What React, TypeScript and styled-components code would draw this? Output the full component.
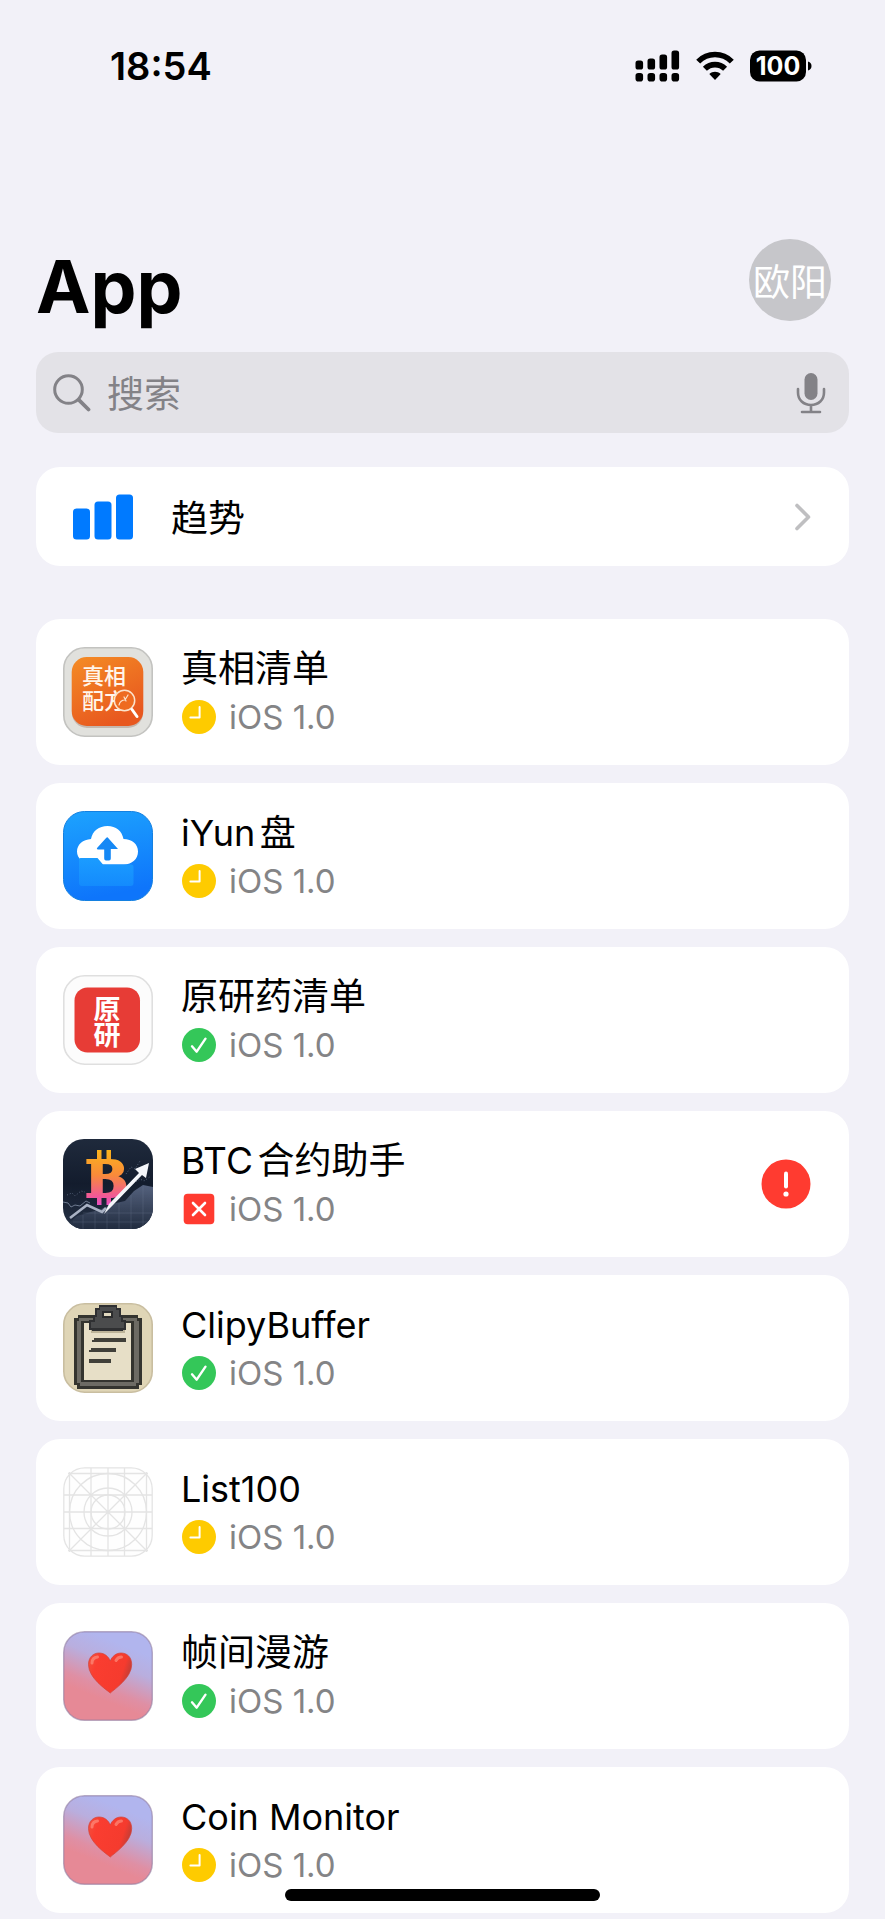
import React from "react";
import styled, { createGlobalStyle } from "styled-components";

const cjk = '"Noto Sans CJK SC"';

const GlobalStyle = createGlobalStyle`
  *, *::before, *::after { box-sizing: border-box; }
  body {
    margin: 0;
    background: #f2f1f8;
    color: #000;
    font-family: Inter, ${cjk}, sans-serif;
    text-autospace: normal;
  }
`;

const Screen = styled.div`
  display: flex;
  flex-direction: column;
  padding: 0 36px 7px;
`;

const StatusBar = styled.div`
  display: flex;
  align-items: center;
  justify-content: space-between;
  height: 132px;
  padding: 0 37px 0 74px;
`;

const Clock = styled.time`
  font-size: 38px;
  line-height: 48px;
  font-weight: 600;
`;

const Indicators = styled.div`
  display: flex;
  align-items: center;
  gap: 16px;
`;

const Header = styled.header`
  display: flex;
  align-items: flex-end;
  justify-content: space-between;
  margin-top: 107px;
  padding-right: 18px;
`;

const Title = styled.h1`
  margin: 0;
  font-size: 73px;
  line-height: 68px;
  font-weight: 700;
`;

const Avatar = styled.button`
  display: flex;
  align-items: center;
  justify-content: center;
  width: 82px;
  height: 82px;
  padding: 0;
  border: 0;
  border-radius: 50%;
  background: #c6c6ca;
  color: #fff;
  font: 400 37px/48px ${cjk}, sans-serif;
  white-space: nowrap;
`;

const SearchBar = styled.label`
  display: flex;
  align-items: center;
  gap: 16px;
  height: 81px;
  margin-top: 31px;
  padding: 0 23px 0 17px;
  border-radius: 22px;
  background: #e3e2e7;
  color: #838287;
`;

const SearchInput = styled.input`
  flex: 1;
  min-width: 0;
  padding: 4px 0 0;
  border: 0;
  outline: 0;
  background: transparent;
  color: #000;
  font: 400 37px/48px Inter, ${cjk}, sans-serif;
  &::placeholder { color: #838287; opacity: 1; }
`;

const IconButton = styled.button`
  display: flex;
  padding: 0;
  border: 0;
  background: none;
  color: inherit;
`;

const Card = styled.a`
  display: flex;
  align-items: center;
  border-radius: 24px;
  background: #fff;
  color: inherit;
  text-decoration: none;
`;

const TrendCard = styled(Card)`
  gap: 37px;
  height: 99px;
  margin-top: 34px;
  padding: 0 37px;
`;

const TrendLabel = styled.span`
  flex: 1;
  padding-top: 4px;
  font-size: 37px;
  line-height: 48px;
`;

const AppList = styled.ul`
  display: flex;
  flex-direction: column;
  gap: 18px;
  margin: 53px 0 0;
  padding: 0;
  list-style: none;
`;

const AppCard = styled(Card)`
  gap: 28px;
  padding: 24px 38px 24px 27px;
`;

const AppInfo = styled.div`
  flex: 1;
  min-width: 0;
  padding-top: 2px;
`;

const AppName = styled.h2<{ $latin: boolean }>`
  margin: 0;
  font-size: ${({ $latin }) => ($latin ? 36 : 37)}px;
  line-height: 48px;
  font-weight: 400;
`;

const AppVersion = styled.p`
  display: flex;
  align-items: center;
  gap: 12px;
  margin: 0;
  color: #848486;
  font-size: 33px;
  line-height: 48px;
`;

const HomeIndicator = styled.div`
  position: fixed;
  bottom: 18px;
  left: 50%;
  width: 315px;
  height: 12px;
  margin-left: -158px;
  border-radius: 6px;
  background: #000;
`;

type Status = "waiting" | "ready" | "rejected";

const StatusIcon = ({ status }: { status: Status }) => (
  <svg width="36" height="36" viewBox="0 0 36 36" fill="none" stroke="#fff" strokeLinecap="round" strokeLinejoin="round" role="img" aria-label={status}>
    {status === "waiting" && (
      <>
        <circle cx="18" cy="18" r="17" fill="#fecb00" stroke="none" />
        <path d="M18.6 8v10.6H9.4" strokeWidth="2" />
      </>
    )}
    {status === "ready" && (
      <>
        <circle cx="18" cy="18" r="17" fill="#34c759" stroke="none" />
        <path d="M11 19.3l4.7 5.4 8.8-13" strokeWidth="2.4" />
      </>
    )}
    {status === "rejected" && (
      <>
        <rect x="2.7" y="2.7" width="30.6" height="30.6" rx="4" fill="#ff3b30" stroke="none" />
        <path d="M12 12l12 12M24 12L12 24" strokeWidth="2.6" />
      </>
    )}
  </svg>
);

const Art = ({ children }: { children: React.ReactNode }) => (
  <svg width="90" height="90" viewBox="0 0 90 90" aria-hidden="true">{children}</svg>
);

const TruthArt = () => (
  <Art>
    <defs>
      <linearGradient id="orange" x1="0" y1="0" x2="0.5" y2="1">
        <stop offset="0" stopColor="#f48c25" />
        <stop offset="1" stopColor="#e8581f" />
      </linearGradient>
    </defs>
    <rect x="0.8" y="0.8" width="88.4" height="88.4" rx="21" fill="#e1e1dd" stroke="#c3c3c0" strokeWidth="1.6" />
    <rect x="9" y="12" width="71" height="69" rx="15" fill="#b9a59a" opacity="0.7" />
    <rect x="8.7" y="10" width="71.6" height="69" rx="15" fill="url(#orange)" />
    <g fill="#fff5ea" fontFamily={cjk} fontWeight="500" fontSize="22">
      <text x="19" y="37">真相</text>
      <text x="19" y="62">配方</text>
    </g>
    <circle cx="61.5" cy="53.5" r="10.2" fill="#ee6b20" stroke="#fbe3cd" strokeWidth="1.5" />
    <path d="M56 58c1-4 3-5 6-5l3-5M61 50l2 4" fill="none" stroke="#fbe3cd" strokeWidth="1.2" strokeLinecap="round" />
    <path d="M69 62.5l5 7" stroke="#fff" strokeWidth="3" strokeLinecap="round" />
  </Art>
);

const CloudArt = () => (
  <Art>
    <defs>
      <linearGradient id="sky" x1="0" y1="0" x2="0.2" y2="1">
        <stop offset="0" stopColor="#1da3fe" />
        <stop offset="1" stopColor="#0e75fb" />
      </linearGradient>
      <linearGradient id="folder" x1="0" y1="0" x2="0" y2="1">
        <stop offset="0" stopColor="#1b9cff" />
        <stop offset="1" stopColor="#148bfd" />
      </linearGradient>
    </defs>
    <rect x="0.5" y="0.5" width="89" height="89" rx="21" fill="url(#sky)" stroke="#1480e0" />
    <path d="M28 53C20 53 14 47 14 40.500C14 33.500 20 28.500 28 28C29.500 20 36 15 44.500 15C53 15 59 20 60.500 28C69 28 75 33 75 40.500C75 48 69 53.500 61 53.500H28z" fill="#fff" />
    <path d="M16 48.500Q16 47 17.500 47H34.500L40 53.500H68Q70.500 53.500 70.500 56V72Q70.500 75 67.500 75H19Q16 75 16 72z" fill="url(#folder)" />
    <path d="M44.500 26.200L55 38H47.800V47.500Q47.800 49.500 46 49.500H43Q41.200 49.500 41.200 47.500V38.500H35Q33 38 34.500 36.500L43.300 26.800Q44 26 44.500 26.200z" fill="#1588f5" />
  </Art>
);

const OriginalArt = () => (
  <Art>
    <rect x="0.8" y="0.8" width="88.4" height="88.4" rx="21" fill="#fcfcfc" stroke="#dfdfdf" strokeWidth="1.6" />
    <rect x="11.500" y="12.500" width="65.500" height="65" rx="13" fill="#e73c36" />
    <g fill="#fff" fontFamily={cjk} fontWeight="700" fontSize="27" textAnchor="middle">
      <text x="44" y="44">原</text>
      <text x="44" y="70">研</text>
    </g>
  </Art>
);

const BitcoinArt = () => (
  <Art>
    <defs>
      <linearGradient id="coin" gradientUnits="userSpaceOnUse" x1="40" y1="12" x2="40" y2="66">
        <stop offset="0" stopColor="#fbb21c" />
        <stop offset="0.45" stopColor="#f98a3a" />
        <stop offset="0.85" stopColor="#f0579a" />
        <stop offset="1" stopColor="#e84fc0" />
      </linearGradient>
      <linearGradient id="night" x1="0" y1="0" x2="0" y2="1">
        <stop offset="0" stopColor="#1f2a3c" />
        <stop offset="0.5" stopColor="#131c2d" />
        <stop offset="1" stopColor="#263246" />
      </linearGradient>
      <linearGradient id="hill" x1="0" y1="0" x2="0" y2="1">
        <stop offset="0" stopColor="#55627e" />
        <stop offset="1" stopColor="#222d40" />
      </linearGradient>
      <clipPath id="tile"><rect width="90" height="90" rx="21" /></clipPath>
    </defs>
    <g clipPath="url(#tile)">
      <rect width="90" height="90" fill="url(#night)" />
      <path d="M0 90L14 77L38 70L53 64L62 62L71 52L80 46L90 48V90z" fill="url(#hill)" />
      <path d="M20 76V90M32 72V90M44 68V90M56 64V90M68 56V90M80 48V90M20 74H90M10 83H90" stroke="#74819b" strokeWidth="0.5" opacity="0.5" />
      <path d="M0 63l5 1 3 4 4-2 5 1 6-5 4 2" fill="none" stroke="#77849a" strokeWidth="0.9" />
      <path d="M4 56l5-2 3 3 6-5 4 1M63 35l5-7 4 2 5-8M68 46l9-6 4 2 7-5" fill="none" stroke="#66738c" strokeWidth="0.8" strokeDasharray="1 2" />
      <g fill="url(#coin)">
        <rect x="34" y="11" width="4.500" height="12" />
        <rect x="43.500" y="11" width="4.500" height="12" />
        <rect x="34" y="56" width="4.500" height="10" />
        <rect x="43.500" y="56" width="4.500" height="10" />
        <text x="22" y="58" fontFamily="DejaVu Serif" fontWeight="700" fontSize="51" stroke="url(#coin)" strokeWidth="2">B</text>
      </g>
      <path d="M7 79L24 66L39 73L43 69" fill="none" stroke="#a9b2c4" strokeWidth="2.600" />
      <path d="M41 75L46 65L76 34L72 30L86 24L83 39L79 36L51 65z" fill="#f4f6fa" />
    </g>
  </Art>
);

const ClipboardArt = () => (
  <Art>
    <rect x="0.8" y="0.8" width="88.400" height="88.400" rx="21" fill="#dfd5b6" stroke="#c9bea0" strokeWidth="1.600" />
    <g shapeRendering="crispEdges">
      <path d="M15 12H75V15H79V82H76V86H14V82H11V15H15z" fill="#34342f" />
      <path d="M16 15H74V18H76V80H73V83H17V80H14V18H16z" fill="#6d6b64" />
      <path d="M18 18H71V79H18z" fill="#34342f" />
      <path d="M21 20H68V77H21z" fill="#e7dfc7" />
      <path d="M28 27H62V30H28z" fill="#bdb499" />
      <path d="M36 2H54V5H58V12H60V17H63V27H60V28H29V27H26V17H30V12H32V5H36z" fill="#2f3032" />
      <path d="M37 4H53V7H56V14H58V19H61V25H28V19H32V14H34V7H37z" fill="#4b4c4d" />
      <path d="M39 8H50V15H39z" fill="#2b2c2d" />
      <path d="M41 10H48V13H41z" fill="#e0d8bf" />
      <path d="M31 35H63V39H29V37H31zM28 45H53V49H26V47H28zM26 56H48V60H26z" fill="#414039" />
    </g>
  </Art>
);

const BlankArt = () => (
  <Art>
    <g fill="none" stroke="#e4e4e4" strokeWidth="1.300">
      <rect x="0.800" y="0.800" width="88.400" height="88.400" rx="21" fill="#fefefe" />
      <path d="M6.500 5V85M28 1V89M45 1V89M61.500 1V89M83.500 5V85M5 6.500H85M1 28H89M1 45H89M1 61.500H89M5 83.500H85M6.500 6.500L83.500 83.500M83.500 6.500L6.500 83.500" />
      <circle cx="45" cy="45" r="38.500" />
      <circle cx="45" cy="45" r="24" />
      <circle cx="45" cy="45" r="17" />
    </g>
  </Art>
);

const HeartArt = () => (
  <Art>
    <defs>
      <linearGradient id="dusk" gradientUnits="userSpaceOnUse" x1="60" y1="14" x2="38" y2="68">
        <stop offset="0" stopColor="#b1b5ee" />
        <stop offset="0.35" stopColor="#b9aede" />
        <stop offset="0.8" stopColor="#df8fa4" />
        <stop offset="1" stopColor="#e68996" />
      </linearGradient>
      <linearGradient id="heart" x1="0" y1="0" x2="1" y2="0.3">
        <stop offset="0" stopColor="#f4523f" />
        <stop offset="0.25" stopColor="#fa3d30" />
        <stop offset="0.85" stopColor="#f53b2e" />
        <stop offset="1" stopColor="#c93d35" />
      </linearGradient>
    </defs>
    <rect x="0.700" y="0.700" width="88.600" height="88.600" rx="21" fill="url(#dusk)" stroke="#8f7ba0" strokeOpacity="0.600" strokeWidth="1.400" />
    <path d="M47.300 62C43 58.500 25.500 47 25.500 33.500C25.500 26 30.500 22 36 22C41.500 22 45.500 25.500 47.300 30C49 25.500 53 22 58 22C64 22 68.700 26 68.700 33.500C68.700 47 51 58.500 47.300 62z" fill="url(#heart)" stroke="#d34339" strokeWidth="0.700" />
    <path d="M29 32c0-3 2-5.500 5.500-6M53 29.500c1-2 3-3.500 5.500-3.500" fill="none" stroke="#ff9a88" strokeWidth="3" strokeLinecap="round" opacity="0.600" />
  </Art>
);

interface AppEntry {
  name: string;
  status: Status;
  Artwork: React.FC;
  latin?: boolean;
  alert?: boolean;
}

const apps: AppEntry[] = [
  { name: "真相清单", status: "waiting", Artwork: TruthArt },
  { name: "iYun盘", status: "waiting", Artwork: CloudArt, latin: true },
  { name: "原研药清单", status: "ready", Artwork: OriginalArt },
  { name: "BTC合约助手", status: "rejected", Artwork: BitcoinArt, alert: true },
  { name: "ClipyBuffer", status: "ready", Artwork: ClipboardArt, latin: true },
  { name: "List100", status: "waiting", Artwork: BlankArt, latin: true },
  { name: "帧间漫游", status: "ready", Artwork: HeartArt },
  { name: "Coin Monitor", status: "waiting", Artwork: HeartArt, latin: true },
];

const AlertIcon = () => (
  <svg width="50" height="50" viewBox="0 0 50 50" role="img" aria-label="需要处理">
    <circle cx="25" cy="25" r="24.500" fill="#ff3b30" />
    <path d="M25 14.500V27.500" stroke="#fff" strokeWidth="4" strokeLinecap="round" />
    <circle cx="25" cy="35" r="2.600" fill="#fff" />
  </svg>
);

const SignalIcon = () => (
  <svg width="45" height="32" viewBox="0 0 45 32" aria-hidden="true">
    {[10.5, 8.500, 4.500, 0.500].map((top, i) => (
      <g key={top}>
        <rect x={0.500 + i * 12} y={top} width="7.600" height={19.500 - top} rx="2.600" />
        <rect x={0.500 + i * 12} y="23" width="7.600" height="8.500" rx="2.800" />
      </g>
    ))}
  </svg>
);

const WifiIcon = () => (
  <svg width="38" height="30" viewBox="0 0 38 30" fill="none" stroke="#000" strokeWidth="5.600" aria-hidden="true">
    <path d="M2.200 10.600C11.500 1.200 26.500 1.200 35.800 10.600" />
    <path d="M8.900 17.800C14.500 12.200 23.500 12.200 29.100 17.800" />
    <path d="M19 29L13.300 23C16.500 20 21.500 20 24.700 23z" fill="#000" stroke="none" />
  </svg>
);

const BatteryIcon = () => (
  <svg width="62" height="32" viewBox="0 0 62 32" aria-label="100">
    <rect y="0.500" width="56" height="31" rx="9.500" />
    <path d="M58 11.500C60.500 12.200 61.500 14 61.500 16S60.500 19.800 58 20.500z" />
    <text x="28" y="25" fill="#fff" fontFamily="Inter" fontWeight="700" fontSize="25" textAnchor="middle">100</text>
  </svg>
);

const SearchIcon = () => (
  <svg width="38" height="38" viewBox="0 0 38 38" fill="none" stroke="currentColor" strokeLinecap="round" aria-hidden="true">
    <circle cx="15.500" cy="15.500" r="13.800" strokeWidth="3" />
    <path d="M25.800 25.800L35.500 35.500" strokeWidth="3.800" />
  </svg>
);

const MicIcon = () => (
  <svg width="30" height="42" viewBox="0 0 30 42" fill="none" stroke="currentColor" strokeWidth="2.600" strokeLinecap="round" aria-hidden="true">
    <rect x="8.500" y="1" width="13" height="27" rx="6.500" fill="currentColor" stroke="none" />
    <path d="M2 17V20.500C2 28 7.500 33 15 33S28 28 28 20.500V17M15 33V40M6 40H24" />
  </svg>
);

const TrendIcon = () => (
  <svg width="61" height="46" viewBox="0 0 61 46" fill="#007aff" aria-hidden="true">
    <rect y="14.500" width="17" height="31" rx="3.500" />
    <rect x="21.500" y="7.500" width="17" height="38" rx="3.500" />
    <rect x="43" y="0.500" width="17" height="45" rx="3.500" />
  </svg>
);

const ChevronIcon = () => (
  <svg width="18" height="30" viewBox="0 0 18 30" fill="none" stroke="#bfbfc1" strokeWidth="3.600" strokeLinecap="round" strokeLinejoin="round" aria-hidden="true">
    <path d="M3 3.500L14.500 15L3 26.500" />
  </svg>
);

export default function App() {
  return (
    <Screen>
      <GlobalStyle />
      <StatusBar>
        <Clock>18:54</Clock>
        <Indicators>
          <SignalIcon />
          <WifiIcon />
          <BatteryIcon />
        </Indicators>
      </StatusBar>
      <Header>
        <Title>App</Title>
        <Avatar type="button">欧阳</Avatar>
      </Header>
      <SearchBar>
        <SearchIcon />
        <SearchInput type="search" placeholder="搜索" aria-label="搜索" />
        <IconButton type="button" aria-label="语音搜索"><MicIcon /></IconButton>
      </SearchBar>
      <main>
        <TrendCard href="#trends">
          <TrendIcon />
          <TrendLabel>趋势</TrendLabel>
          <ChevronIcon />
        </TrendCard>
        <AppList>
          {apps.map(({ name, status, Artwork, latin = false, alert }) => (
            <li key={name}>
              <AppCard href="#app">
                <Artwork />
                <AppInfo>
                  <AppName $latin={latin}>{name}</AppName>
                  <AppVersion><StatusIcon status={status} />iOS 1.0</AppVersion>
                </AppInfo>
                {alert && <AlertIcon />}
              </AppCard>
            </li>
          ))}
        </AppList>
      </main>
      <HomeIndicator />
    </Screen>
  );
}
